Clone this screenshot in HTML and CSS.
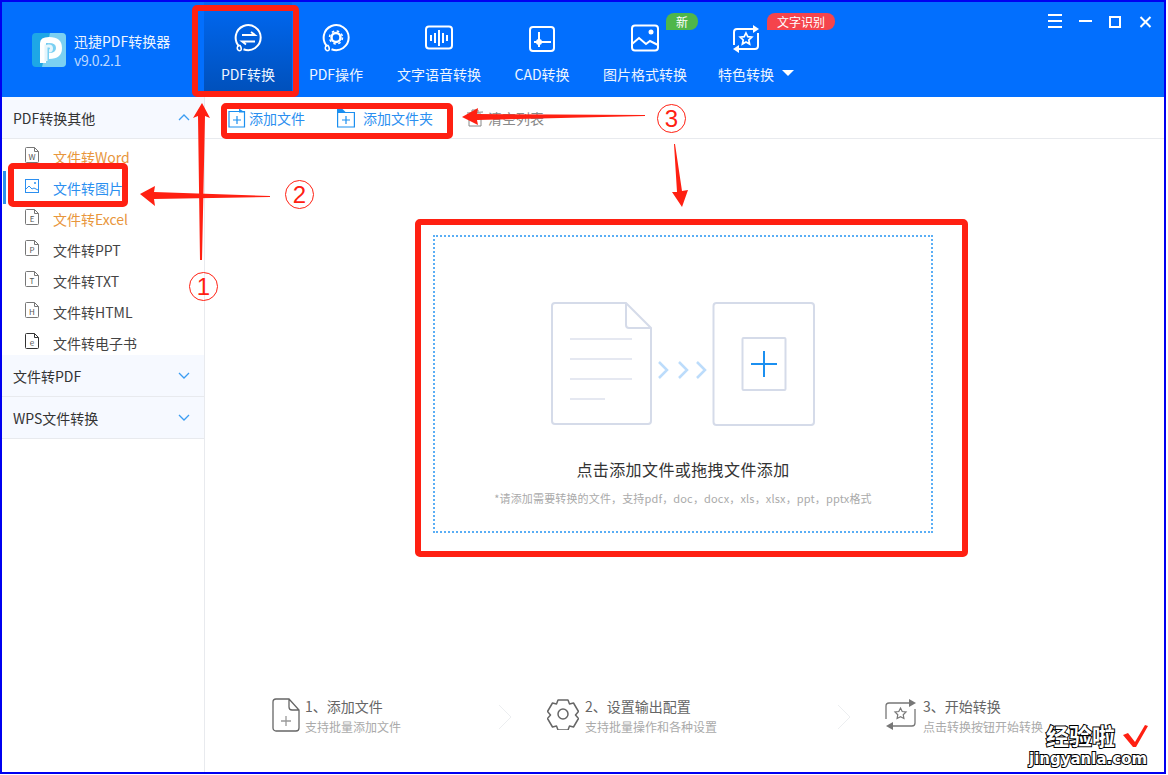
FILE: index.html
```html
<!DOCTYPE html>
<html lang="zh-CN">
  <head>
    <meta charset="UTF-8" />
    <title>迅捷PDF转换器</title>
    <link rel="stylesheet" href="styles.css">
  </head>
  <body>
    <!-- shared file outline for the sidebar icons -->
    <svg class="defs" width="0" height="0">
      <symbol id="doc" viewBox="0 0 14 16">
        <path d="M1.5.5h8l4 4v10a1 1 0 0 1-1 1h-11a1 1 0 0 1-1-1v-13a1 1 0 0 1 1-1zM9.5.5v4h4" fill="none" stroke="currentColor" />
      </symbol>
      <symbol id="add" viewBox="0 0 18 20">
        <path d="M1 3.500h10l5.500 0v15.500h-15.500z" fill="none" stroke="#1b8ff0" stroke-width="1.200" />
        <path d="M11 0.500l6 4h-6z" fill="#1b8ff0" />
        <path d="M5 12h8M9 8v8" stroke="#1b8ff0" stroke-width="1.200" />
      </symbol>
      <symbol id="add-folder" viewBox="0 0 18 20">
        <path d="M.6 4.500h16.800v14.500H.6z" fill="none" stroke="#1b8ff0" stroke-width="1.200" />
        <path d="M0 .5h5l4 4H0z" fill="#1b8ff0" />
        <path d="M5 12h8M9 8v8" stroke="#1b8ff0" stroke-width="1.200" />
      </symbol>
    </svg>

    <div class="frame">
      <!-- Top bar -->
      <header class="topbar">
        <div class="brand">
          <svg class="logo" width="34" height="34" viewBox="0 0 34 34">
            <rect width="34" height="34" rx="4" fill="#1ea7e6" />
            <path d="M18 0h12a4 4 0 0 1 4 4v26a4 4 0 0 1-4 4H10z" fill="#7bd0f2" />
            <path d="M11 30V10q0-3 6-3 10 0 10 8t-10 8" fill="none" stroke="#fff" stroke-width="6" />
            <path d="M14 28V13h3a2.500 2.500 0 0 1 0 5" fill="none" stroke="#e4f5fc" stroke-width="3" />
          </svg>
          <div>
            <div class="brand-name">迅捷PDF转换器</div>
            <div class="brand-version">v9.0.2.1</div>
          </div>
        </div>
        <nav class="tabs">
          <div class="tab active">
            <svg class="tab-icon" width="32" height="32" viewBox="0 0 32 32">
              <path d="M7.200 23.300A12.500 12.500 0 1 1 11.500 26.200" fill="none" stroke="#fff" stroke-width="2" />
              <path d="M6 22.500q-1.500 3 0 4.500t3 0q1-1.500-1-4.500z" fill="none" stroke="#fff" stroke-width="1.500" />
              <path d="M10 12h13l-4-3M23 18.500H10l4 3" fill="none" stroke="#fff" stroke-width="1.800" />
            </svg>
            <span>PDF转换</span>
          </div>
          <div class="tab">
            <svg class="tab-icon" width="32" height="32" viewBox="0 0 32 32">
              <path d="M7.200 23.300A12.500 12.500 0 1 1 11.500 26.200" fill="none" stroke="#fff" stroke-width="2" />
              <path d="M6 22.500q-1.500 3 0 4.500t3 0q1-1.500-1-4.500z" fill="none" stroke="#fff" stroke-width="1.500" />
              <circle cx="16" cy="14.500" r="4.500" fill="none" stroke="#fff" stroke-width="2.500" />
              <circle cx="16" cy="14.500" r="6.500" fill="none" stroke="#fff" stroke-width="1.500" stroke-dasharray="2.500 2.600" />
            </svg>
            <span>PDF操作</span>
          </div>
          <div class="tab wide">
            <svg class="tab-icon" width="32" height="32" viewBox="0 0 32 32">
              <rect x="3" y="3.500" width="26" height="22" rx="3" fill="none" stroke="#fff" stroke-width="2" />
              <path d="M8 12v6M12 10v10M16 7v16M20 10v10M24 12v6" stroke="#fff" stroke-width="2" />
            </svg>
            <span>文字语音转换</span>
          </div>
          <div class="tab">
            <svg class="tab-icon" width="32" height="32" viewBox="0 0 32 32">
              <rect x="4" y="4" width="24" height="24" rx="3" fill="none" stroke="#fff" stroke-width="2" />
              <path d="M13 9v15M8 19h17" stroke="#fff" stroke-width="2" />
              <circle cx="13" cy="19" r="3" fill="#fff" />
            </svg>
            <span>CAD转换</span>
          </div>
          <div class="tab wide">
            <svg class="tab-icon" width="32" height="32" viewBox="0 0 32 32">
              <rect x="3" y="2.500" width="26" height="25" rx="3" fill="none" stroke="#fff" stroke-width="2" />
              <circle cx="22" cy="9" r="2.500" fill="#fff" />
              <path d="M3 21l7-6 7 6 4-3 8 4" fill="none" stroke="#fff" stroke-width="2" />
            </svg>
            <span>图片格式转换</span>
            <em class="badge green">新</em>
          </div>
          <div class="tab last">
            <svg class="tab-icon" width="32" height="32" viewBox="0 0 32 32">
              <path d="M4 22V9a3 3 0 0 1 3-3h18" fill="none" stroke="#fff" stroke-width="2" />
              <path d="M23 2l6 4-6 4z" fill="#fff" />
              <path d="M28 10v13a3 3 0 0 1-3 3H7" fill="none" stroke="#fff" stroke-width="2" />
              <path d="M9 22l-6 4 6 4z" fill="#fff" />
              <path d="M16 10l1.800 3.700 4 .5-3 2.800.8 4-3.600-2-3.600 2 .8-4-3-2.800 4-.5z" fill="none" stroke="#fff" stroke-width="1.700" />
            </svg>
            <span>特色转换</span>
            <i class="caret"></i>
            <em class="badge red">文字识别</em>
          </div>
        </nav>
        <div class="win-controls">
          <svg width="106" height="14" viewBox="0 0 106 14">
            <path d="M0 1h14M0 7h14M0 13h14M31 7h13" stroke="#fff" stroke-width="2" />
            <rect x="62" y="3" width="10" height="10" fill="none" stroke="#fff" stroke-width="2" />
            <path d="M92.500 3l10 10M102.500 3l-10 10" stroke="#fff" stroke-width="2" />
          </svg>
        </div>
      </header>

      <div class="content">
        <!-- Left sidebar -->
        <aside class="sidebar">
          <div class="side-head">
            <span>PDF转换其他</span>
            <svg class="chev" width="12" height="7" viewBox="0 0 12 7"><path d="M1 6l5-5 5 5" fill="none" stroke="#3b9df2" stroke-width="1.300" /></svg>
          </div>
          <ul class="side-list">
            <li class="side-item orange"><span class="file-ico"><svg width="14" height="16"><use href="#doc" /></svg><b>W</b></span>文件转Word</li>
            <li class="side-item current"><svg class="img-ico" width="14" height="14" viewBox="0 0 14 14"><rect x=".5" y=".5" width="13" height="13" fill="none" stroke="#2b8ff0" /><circle cx="10" cy="4" r="1" fill="#2b8ff0" /><path d="M1 10l3-3 3 3 2-1 4 2" fill="none" stroke="#2b8ff0" /></svg>文件转图片</li>
            <li class="side-item orange"><span class="file-ico"><svg width="14" height="16"><use href="#doc" /></svg><b>E</b></span>文件转Excel</li>
            <li class="side-item"><span class="file-ico"><svg width="14" height="16"><use href="#doc" /></svg><b>P</b></span>文件转PPT</li>
            <li class="side-item"><span class="file-ico"><svg width="14" height="16"><use href="#doc" /></svg><b>T</b></span>文件转TXT</li>
            <li class="side-item"><span class="file-ico"><svg width="14" height="16"><use href="#doc" /></svg><b>H</b></span>文件转HTML</li>
            <li class="side-item"><span class="file-ico dark"><svg width="14" height="16"><use href="#doc" /></svg><b>e</b></span>文件转电子书</li>
          </ul>
          <div class="side-head">
            <span>文件转PDF</span>
            <svg class="chev" width="12" height="7" viewBox="0 0 12 7"><path d="M1 1l5 5 5-5" fill="none" stroke="#3b9df2" stroke-width="1.300" /></svg>
          </div>
          <div class="side-head">
            <span>WPS文件转换</span>
            <svg class="chev" width="12" height="7" viewBox="0 0 12 7"><path d="M1 1l5 5 5-5" fill="none" stroke="#3b9df2" stroke-width="1.300" /></svg>
          </div>
        </aside>

        <!-- Main area -->
        <main class="main">
          <div class="toolbar">
            <div class="tool first"><svg width="18" height="20"><use href="#add" /></svg>添加文件</div>
            <div class="tool second"><svg width="18" height="20"><use href="#add-folder" /></svg>添加文件夹</div>
            <div class="tool clear">
              <svg width="16" height="18" viewBox="0 0 16 18"><path d="M2 5h12v12H2zM0 4l16-1M5 3V1h6v2" fill="none" stroke="#888" /></svg>
              清空列表
            </div>
          </div>

          <div class="dropzone">
            <svg class="drop-art" width="266" height="124" viewBox="0 0 266 124">
              <path d="M5 1h71l25 25v93a3 3 0 0 1-3 3H5a3 3 0 0 1-3-3V4a3 3 0 0 1 3-3zM76 1v22a3 3 0 0 0 3 3h22" fill="none" stroke="#d5dbe9" stroke-width="2" />
              <path d="M20 37h62M20 57h62M20 77h62M20 97h35" stroke="#e5e8f1" stroke-width="2" />
              <path d="M109 60l8 8-8 8M129 60l8 8-8 8M147 60l8 8-8 8" fill="none" stroke="#bcdcfb" stroke-width="2.500" />
              <rect x="163.500" y="1" width="100.500" height="122" rx="3" fill="none" stroke="#d5dbe9" stroke-width="2" />
              <rect x="192.500" y="36" width="43" height="52" rx="1" fill="none" stroke="#d5dbe9" stroke-width="2" />
              <path d="M201 62h26M214 49v26" stroke="#1b8ff0" stroke-width="2" />
            </svg>
            <div class="drop-title">点击添加文件或拖拽文件添加</div>
            <div class="drop-sub">*请添加需要转换的文件，支持pdf，doc，docx，xls，xlsx，ppt，pptx格式</div>
          </div>

          <div class="steps">
            <div class="step step-one">
              <svg width="28" height="34" viewBox="0 0 28 34">
                <path d="M4 1h13l10 11v18a3 3 0 0 1-3 3H4a3 3 0 0 1-3-3V4a3 3 0 0 1 3-3zM17 1v8a3 3 0 0 0 3 3h7" fill="none" stroke="#666" stroke-width="1.300" />
                <path d="M9 23h10M14 18v10" stroke="#999" stroke-width="1.300" />
              </svg>
              <div><p class="step-title">1、添加文件</p><p class="step-sub">支持批量添加文件</p></div>
            </div>
            <svg class="step-arrow" width="14" height="26" viewBox="0 0 14 26"><path d="M1 1l12 12L1 25" fill="none" stroke="#eceef0" /></svg>
            <div class="step step-two">
              <svg width="32" height="32" viewBox="0 0 32 32">
                <path d="M11 2h10l1.500 4 4-1 5 8.500-3 3.500 3 3.500-5 8.500-4-1-1.500 4H11l-1.500-4-4 1-5-8.500 3-3.500-3-3.500 5-8.500 4 1z" fill="none" stroke="#666" stroke-width="1.500" stroke-linejoin="round" />
                <circle cx="16" cy="16" r="5" fill="none" stroke="#666" stroke-width="1.500" />
              </svg>
              <div><p class="step-title">2、设置输出配置</p><p class="step-sub">支持批量操作和各种设置</p></div>
            </div>
            <svg class="step-arrow" width="14" height="26" viewBox="0 0 14 26"><path d="M1 1l12 12L1 25" fill="none" stroke="#eceef0" /></svg>
            <div class="step step-three">
              <svg width="32" height="32" viewBox="0 0 32 32">
                <path d="M1 21V8a3 3 0 0 1 3-3h20" fill="none" stroke="#777" stroke-width="1.300" />
                <path d="M24 1l7 4-7 4z" fill="#777" />
                <path d="M30 11v14a3 3 0 0 1-3 3H8" fill="none" stroke="#777" stroke-width="1.300" />
                <path d="M8 24l-7 4 7 4z" fill="#777" />
                <path d="M15.500 10l1.700 3.500 3.800.5-2.800 2.700.7 3.800-3.400-1.800-3.400 1.800.7-3.800-2.800-2.700 3.800-.5z" fill="none" stroke="#777" stroke-width="1.200" />
              </svg>
              <div><p class="step-title">3、开始转换</p><p class="step-sub">点击转换按钮开始转换</p></div>
            </div>
          </div>
        </main>
      </div>
    </div>

    <!-- Red markup drawn over the screenshot -->
    <div class="mark mark-tab"></div>
    <div class="mark mark-tools"></div>
    <div class="mark mark-item"></div>
    <div class="mark mark-drop"></div>
    <svg class="arrows" width="1166" height="774" viewBox="0 0 1166 774">
      <path d="M202 103l8 15-5-2-3 144h-2l-2-144-5 2z" />
      <path d="M140 194l15-8-1 6 116 4v1l-116 2 1 7z" />
      <path d="M462 117l16-9-1 6 168 1v1l-168 4 1 5z" />
      <path d="M674 144l1 0 7 47 6-1-6 17-10-15 5 0z" />
      <path d="M1123 735l5-2 7 9 10-17 3 1-12 21h-3z" />
    </svg>
    <span class="num num-one">1</span>
    <span class="num num-two">2</span>
    <span class="num num-three">3</span>
    <div class="wm wm-cn">经验啦</div>
    <div class="wm wm-en">jingyanla.com</div>
  </body>
</html>
```

FILE: styles.css
```css
* {
  box-sizing: border-box;
}

body {
  margin: 0;
  background-color: #fff;
  font-family: "Noto Sans CJK SC", "Noto Sans", sans-serif;
  font-size: 14px;
  color: #333;
}

.defs {
  position: absolute;
}

.frame {
  width: 1166px;
  height: 774px;
  border: 2px solid #0000f0;
  display: flex;
  flex-direction: column;
  overflow: hidden;
}

/* Top bar */
.topbar {
  height: 95px;
  flex: none;
  background-color: #026ffe;
  display: flex;
  color: #fff;
}

.brand {
  width: 202px;
  padding: 31px 0 0 30px;
  display: flex;
  gap: 8px;
}

.brand-name {
  line-height: 16px;
  color: #eef5ff;
}

.brand-version {
  line-height: 16px;
  margin-top: 3px;
  letter-spacing: -0.4px;
  color: #bcd8ff;
}

.tabs {
  display: flex;
}

.tab {
  position: relative;
  width: 88px;
  height: 95px;
  padding-top: 21px;
  display: flex;
  flex-direction: column;
  align-items: center;
  color: #eef5ff;
  line-height: 20px;
}

.tab.wide {
  width: 118px;
}

.tab.last {
  width: 84px;
}

.tab.last span {
  white-space: nowrap;
}

.tab.active {
  background: linear-gradient(#0068f2, #004fb8);
}

.tab-icon {
  margin-bottom: 9px;
}

.caret {
  position: absolute;
  left: 78px;
  top: 68px;
  border-left: 6px solid transparent;
  border-right: 6px solid transparent;
  border-top: 6px solid #fff;
}

.badge {
  position: absolute;
  top: 11px;
  height: 17px;
  line-height: 17px;
  font-size: 12px;
  font-style: normal;
  text-align: center;
  color: #fff;
  border-radius: 8px 8px 8px 0;
}

.badge.green {
  left: 80px;
  width: 32px;
  background-color: #4fb64a;
}

.badge.red {
  left: 63px;
  width: 68px;
  background-color: #f5444c;
}

.win-controls {
  margin-left: auto;
  padding: 10px 10px 0 0;
}

/* Sidebar */
.content {
  flex: 1;
  display: flex;
  min-height: 0;
}

.sidebar {
  width: 203px;
  flex: none;
  border-right: 1px solid #e8eaee;
}

.side-head {
  height: 42px;
  padding: 0 14px 0 11px;
  display: flex;
  align-items: center;
  justify-content: space-between;
  background-color: #f6f9ff;
  border-bottom: 1px solid #e8eaee;
  color: #333;
}

.side-list {
  list-style: none;
  margin: 0;
  padding: 2px 0 0;
  height: 216px;
  overflow: hidden;
}

.side-item {
  height: 31px;
  padding-left: 23px;
  display: flex;
  align-items: center;
  gap: 14px;
  color: #444;
  position: relative;
}

.side-item.orange {
  color: #e8963c;
}

.side-item.current {
  color: #2b8ff0;
}

.side-item.current::before {
  content: "";
  position: absolute;
  left: 1px;
  top: -1px;
  width: 3px;
  height: 33px;
  background-color: #2b8fee;
}

.file-ico {
  position: relative;
  width: 14px;
  height: 16px;
  color: #777;
  margin-top: -3px;
}

.file-ico.dark {
  color: #333;
}

.file-ico svg {
  display: block;
}

.file-ico b {
  position: absolute;
  left: 0;
  right: 0;
  top: 5px;
  line-height: 9px;
  font-size: 8px;
  font-weight: normal;
  text-align: center;
  color: #555;
}

.img-ico {
  margin-top: -3px;
}

/* Main area */
.main {
  flex: 1;
  min-width: 0;
}

.toolbar {
  height: 42px;
  display: flex;
  align-items: center;
  border-bottom: 1px solid #e8eaee;
  color: #2b8ff0;
}

.tool {
  display: flex;
  align-items: center;
  gap: 3px;
}

.tool.first {
  margin-left: 23px;
}

.tool.second {
  margin-left: 32px;
  gap: 8px;
}

.tool.clear {
  margin-left: 34px;
  gap: 5px;
  color: #888;
}

.dropzone {
  width: 500px;
  height: 298px;
  margin: 96px 0 0 228px;
  padding-top: 65px;
  border: 2px dotted #5aaef5;
  text-align: center;
}

.drop-art {
  display: block;
  margin: 0 auto;
}

.drop-title {
  margin-top: 31px;
  font-size: 16px;
  line-height: 24px;
  letter-spacing: 0.4px;
  color: #333;
}

.drop-sub {
  margin-top: 9px;
  font-size: 11px;
  line-height: 16px;
  letter-spacing: 0.15px;
  color: #aaa;
}

.steps {
  display: flex;
  align-items: center;
  margin: 165px 0 0 67px;
}

.step {
  display: flex;
  align-items: flex-start;
  gap: 6px;
}

.step-one {
  width: 226px;
  gap: 5px;
}

.step-two {
  width: 290px;
  margin-left: 35px;
}

.step-three {
  margin-left: 34px;
}

.step-title {
  margin: 0;
  font-size: 14px;
  line-height: 16px;
  color: #666;
}

.step-sub {
  margin: 5px 0 0;
  font-size: 12px;
  line-height: 16px;
  color: #aaa;
}

/* Red markup */
.mark {
  position: absolute;
  border: 6px solid #ff2012;
  border-radius: 5px;
}

.mark-tab {
  left: 192px;
  top: 5px;
  width: 107px;
  height: 92px;
}

.mark-tools {
  left: 221px;
  top: 103px;
  width: 232px;
  height: 36px;
}

.mark-item {
  left: 8px;
  top: 163px;
  width: 120px;
  height: 44px;
}

.mark-drop {
  left: 415px;
  top: 219px;
  width: 553px;
  height: 338px;
}

.arrows {
  position: absolute;
  left: 0;
  top: 0;
  fill: #ff2012;
}

.num {
  position: absolute;
  width: 29px;
  height: 29px;
  line-height: 27px;
  border: 1.500px solid #ff2012;
  border-radius: 50%;
  text-align: center;
  font-family: "Liberation Sans", sans-serif;
  font-size: 24px;
  color: #ff2012;
}

.num-one {
  left: 189px;
  top: 272px;
}

.num-two {
  left: 285px;
  top: 180px;
}

.num-three {
  left: 657px;
  top: 104px;
}

/* Watermark */
.wm {
  position: absolute;
  font-weight: bold;
  color: #fff;
  -webkit-text-stroke: 2px #000;
  paint-order: stroke fill;
  white-space: nowrap;
}

.wm-cn {
  left: 1046px;
  top: 723px;
  font-family: "Noto Sans CJK SC", sans-serif;
  font-size: 23px;
  line-height: 25px;
}

.wm-en {
  left: 1029px;
  top: 750px;
  font-family: "DejaVu Sans", sans-serif;
  font-size: 15px;
  line-height: 18px;
}
```
